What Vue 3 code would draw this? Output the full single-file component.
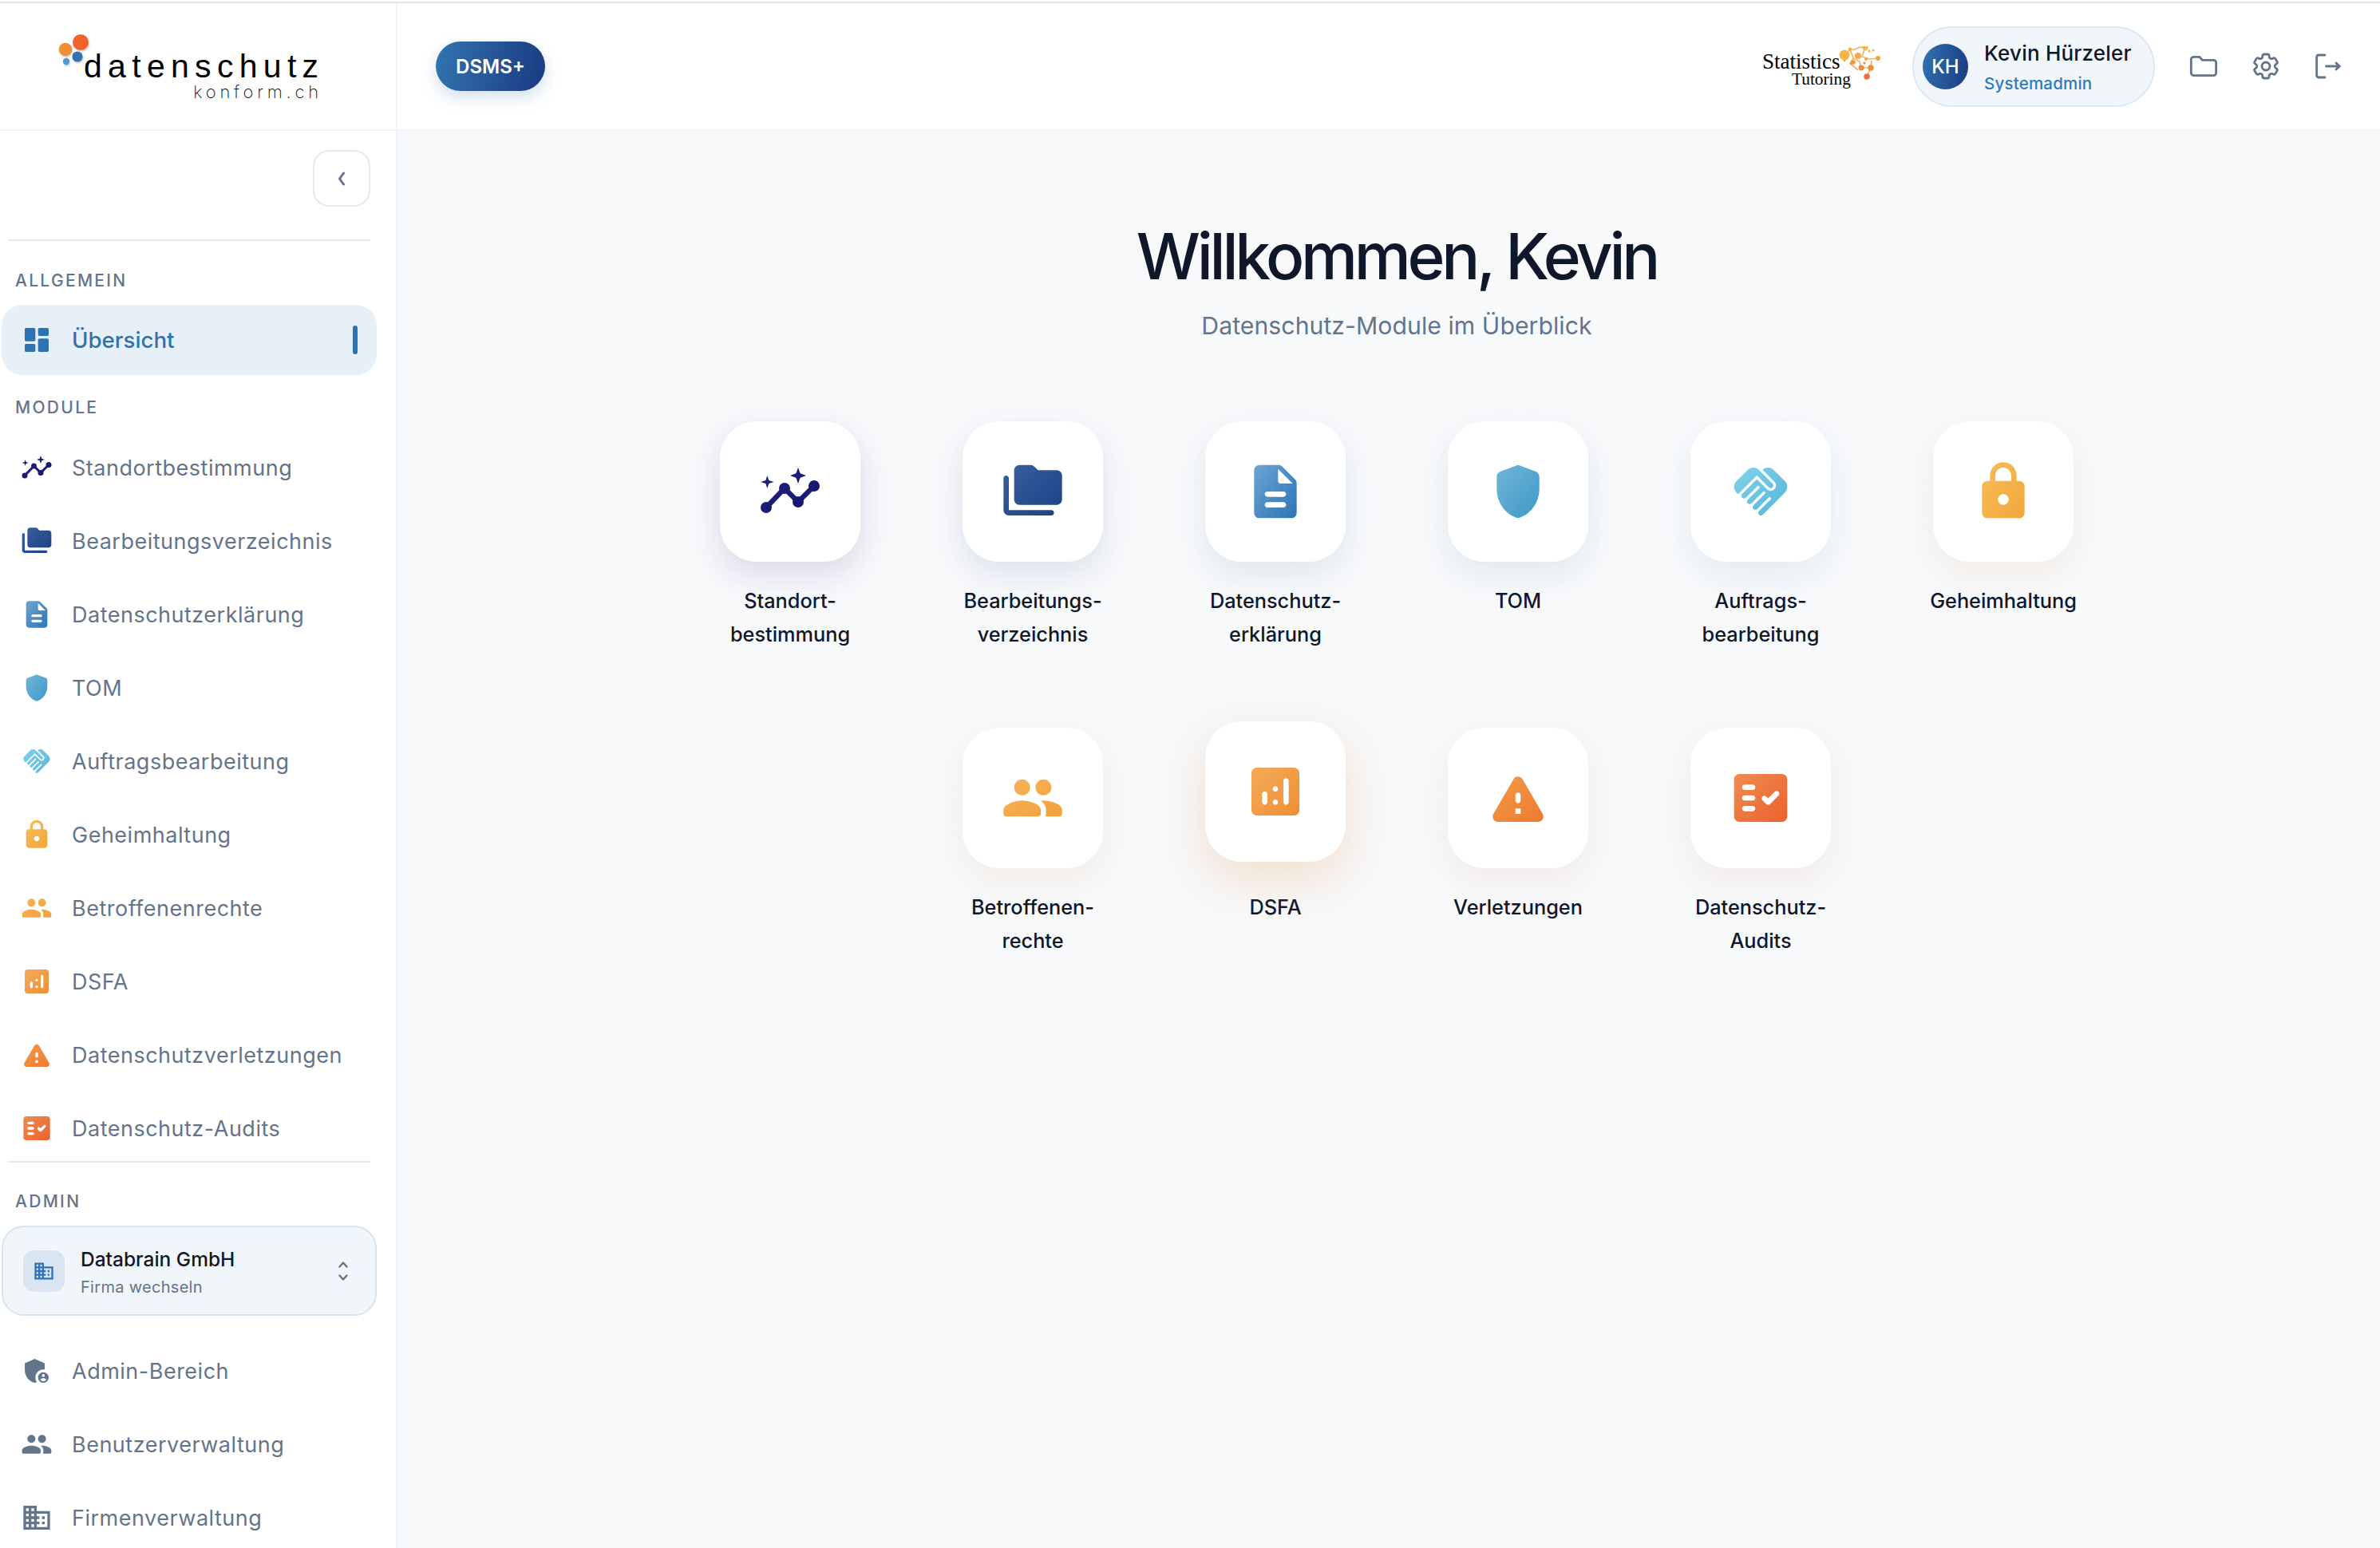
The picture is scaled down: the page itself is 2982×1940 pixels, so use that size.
<template>
  <div class="page">
    <div class="top-line"></div>

    <header class="header">
      <div class="logo-cell">
        <div class="logo">
          <svg class="logo-dots" viewBox="0 0 60 60" width="60" height="60">
            <circle cx="41" cy="13" r="10" fill="#f0622b" />
            <circle cx="22" cy="22" r="8.3" fill="#f18f34" />
            <circle cx="37" cy="31" r="6.6" fill="#3274b0" />
            <circle cx="23" cy="37" r="4.2" fill="#4a9bcf" />
          </svg>
          <div class="logo-main">datenschutz</div>
          <div class="logo-sub">konform.ch</div>
        </div>
      </div>

      <div class="bar">
        <div class="dsms">DSMS+</div>

        <div class="bar-right">
          <div class="partner">
            <div class="partner-name">Statistics</div>
            <div class="partner-sub">Tutoring</div>
            <svg class="partner-mark" viewBox="0 0 60 60" width="60" height="60">
              <path d="M7 11 14 4 20 4 26 1 33 1.500 M14 4 18 15 26 19 28 27 M33 1.500 29 13 38 16 49 15 M18 15 14 21 24 30 M28 27 40 27 35 38 M40 27 41 18" fill="none" stroke="#f5b060" stroke-width="1.700" />
              <circle v-for="(d, i) in partnerDots" :key="i" :cx="d[0]" :cy="d[1]" :r="d[2]" :fill="d[3]" />
            </svg>
          </div>

          <div class="user">
            <div class="avatar">KH</div>
            <div class="user-text">
              <div class="user-name">Kevin Hürzeler</div>
              <div class="user-role">Systemadmin</div>
            </div>
          </div>

          <div class="tool">
            <svg viewBox="0 0 24 24" width="40" height="40" fill="none" stroke="#64748b" stroke-width="1.7" stroke-linejoin="round">
              <path d="M2.6 7a2 2 0 0 1 2-2H9l2 2.4h8.4a2 2 0 0 1 2 2V17a2 2 0 0 1-2 2H4.6a2 2 0 0 1-2-2z" />
            </svg>
          </div>
          <div class="tool">
            <svg viewBox="0 0 24 24" width="40" height="40" fill="none" stroke="#64748b" stroke-width="1.7" stroke-linejoin="round">
              <path d="M9.594 3.94c.09-.542.56-.94 1.11-.94h2.593c.55 0 1.02.398 1.11.94l.213 1.281c.063.374.313.686.645.87.074.04.147.083.22.127.324.196.72.257 1.075.124l1.217-.456a1.125 1.125 0 011.37.49l1.296 2.247a1.125 1.125 0 01-.26 1.431l-1.003.827c-.293.24-.438.613-.431.992a6.759 6.759 0 010 .255c-.007.378.138.75.43.99l1.005.828c.424.35.534.954.26 1.43l-1.298 2.247a1.125 1.125 0 01-1.369.491l-1.217-.456c-.355-.133-.75-.072-1.076.124a6.57 6.57 0 01-.22.128c-.331.183-.581.495-.644.869l-.213 1.28c-.09.543-.56.941-1.11.941h-2.594c-.55 0-1.02-.398-1.11-.94l-.213-1.281c-.062-.374-.312-.686-.644-.87a6.52 6.52 0 01-.22-.127c-.325-.196-.72-.257-1.076-.124l-1.217.456a1.125 1.125 0 01-1.369-.49l-1.297-2.247a1.125 1.125 0 01.26-1.431l1.004-.827c.292-.24.437-.613.43-.992a6.932 6.932 0 010-.255c.007-.378-.138-.75-.43-.99l-1.004-.828a1.125 1.125 0 01-.26-1.43l1.297-2.247a1.125 1.125 0 011.37-.491l1.216.456c.356.133.751.072 1.076-.124.072-.044.146-.087.22-.128.332-.183.582-.495.644-.869l.214-1.281z" />
              <circle cx="12" cy="12" r="3" />
            </svg>
          </div>
          <div class="tool">
            <svg viewBox="0 0 24 24" width="40" height="40" fill="none" stroke="#64748b" stroke-width="1.7" stroke-linecap="round" stroke-linejoin="round">
              <path d="M9.6 3.6H5a1.6 1.6 0 0 0-1.6 1.6v13.6A1.6 1.6 0 0 0 5 20.4h4.6" />
              <path d="M10.5 12H20.5M18 9.6l2.6 2.4-2.6 2.4" />
            </svg>
          </div>
        </div>
      </div>
    </header>

    <div class="body">
      <!-- shared gradients for all module icons -->
      <svg class="defs" width="0" height="0">
        <defs>
          <linearGradient v-for="m in modules" :id="'grad-' + m.key" :key="m.key" x1="0" y1="0" x2="1" y2="1">
            <stop offset="0" :stop-color="m.from" />
            <stop offset="1" :stop-color="m.to" />
          </linearGradient>
        </defs>
      </svg>

      <aside class="sidebar">
        <div class="collapse-row">
          <button class="collapse">
            <svg viewBox="0 0 24 24" width="24" height="24" fill="none" stroke="#64748b" stroke-width="3" stroke-linecap="round" stroke-linejoin="round">
              <path d="M14.5 5 9.500 12l5 7" />
            </svg>
          </button>
        </div>
        <div class="divider"></div>

        <div class="section first">ALLGEMEIN</div>
        <div class="nav-row active">
          <svg class="nav-icon" viewBox="0 0 24 24">
            <path fill="#2f72b0" d="M4 13h6c.55 0 1-.45 1-1V4c0-.55-.45-1-1-1H4c-.55 0-1 .45-1 1v8c0 .55.45 1 1 1zm0 8h6c.55 0 1-.45 1-1v-4c0-.55-.45-1-1-1H4c-.55 0-1 .45-1 1v4c0 .55.45 1 1 1zm10 0h6c.55 0 1-.45 1-1v-8c0-.55-.45-1-1-1h-6c-.55 0-1 .45-1 1v8c0 .55.45 1 1 1zM13 4v4c0 .55.45 1 1 1h6c.55 0 1-.45 1-1V4c0-.55-.45-1-1-1h-6c-.55 0-1 .45-1 1z" />
          </svg>
          <span>Übersicht</span>
          <i class="active-mark"></i>
        </div>

        <div class="section">MODULE</div>
        <div class="nav-list">
          <div v-for="m in modules" :key="m.key" class="nav-row">
            <svg class="nav-icon" viewBox="0 0 24 24">
              <path v-if="m.line" :d="m.line" fill="none" :stroke="'url(#grad-' + m.key + ')'" stroke-width="1.9" stroke-linejoin="round" />
              <path :d="m.d" :fill="'url(#grad-' + m.key + ')'" fill-rule="evenodd" />
            </svg>
            <span>{{ m.nav }}</span>
          </div>
        </div>
        <div class="divider tight"></div>

        <div class="section admin">ADMIN</div>
        <div class="company">
          <div class="company-icon">
            <svg viewBox="0 0 24 24" width="28" height="28">
              <path fill="#2f72b5" :d="buildingPath" />
            </svg>
          </div>
          <div class="company-text">
            <div class="company-name">Databrain GmbH</div>
            <div class="company-sub">Firma wechseln</div>
          </div>
          <svg viewBox="0 0 24 32" width="24" height="32" fill="none" stroke="#64748b" stroke-width="2.4" stroke-linecap="round" stroke-linejoin="round">
            <path d="M7.5 10.5 12 5.5l4.500 5M7.500 21.500l4.500 5 4.500-5" />
          </svg>
        </div>

        <div class="nav-list admin-list">
          <div class="nav-row">
            <svg class="nav-icon" viewBox="0 0 24 24">
              <path fill="#64748b" d="M17 11c.34 0 .67.04 1 .09V6.27L10.500 3 3 6.270v4.910c0 4.540 3.200 8.790 7.500 9.820.550-.130 1.080-.320 1.600-.550-.690-.980-1.100-2.170-1.100-3.450 0-3.310 2.690-6 6-6z" />
              <path fill="#64748b" d="M17 13c-2.210 0-4 1.790-4 4s1.790 4 4 4 4-1.790 4-4-1.790-4-4-4zm0 1.380c.620 0 1.120.510 1.120 1.120s-.510 1.120-1.120 1.120-1.120-.510-1.120-1.120.500-1.120 1.120-1.120zm0 5.370c-.930 0-1.740-.460-2.240-1.170.050-.720 1.510-1.080 2.240-1.080s2.190.360 2.240 1.080c-.500.710-1.310 1.170-2.240 1.170z" />
            </svg>
            <span>Admin-Bereich</span>
          </div>
          <div class="nav-row">
            <svg class="nav-icon" viewBox="0 0 24 24">
              <path fill="#64748b" :d="peoplePath" />
            </svg>
            <span>Benutzerverwaltung</span>
          </div>
          <div class="nav-row">
            <svg class="nav-icon" viewBox="0 0 24 24">
              <path fill="#64748b" :d="buildingPath" />
            </svg>
            <span>Firmenverwaltung</span>
          </div>
        </div>
      </aside>

      <main class="main">
        <h1 class="title">Willkommen, Kevin</h1>
        <p class="subtitle">Datenschutz-Module im Überblick</p>

        <div class="grid">
          <div v-for="m in modules" :key="m.key" class="item">
            <div class="tile" :class="{ lift: m.key === 'dsfa' }" :style="{ '--glow': m.glow }">
              <svg viewBox="0 0 24 24" width="80" height="80">
                <path v-if="m.line" :d="m.line" fill="none" :stroke="'url(#grad-' + m.key + ')'" stroke-width="1.9" stroke-linejoin="round" />
                <path :d="m.d" :fill="'url(#grad-' + m.key + ')'" fill-rule="evenodd" />
              </svg>
            </div>
            <div class="label">
              <div v-for="l in m.label" :key="l">{{ l }}</div>
            </div>
          </div>
        </div>
      </main>
    </div>
  </div>
</template>

<script setup>
const peoplePath = 'M16 11c1.660 0 2.990-1.340 2.990-3S17.660 5 16 5c-1.660 0-3 1.340-3 3s1.340 3 3 3zm-8 0c1.660 0 2.990-1.340 2.990-3S9.660 5 8 5C6.340 5 5 6.340 5 8s1.340 3 3 3zm0 2c-2.330 0-7 1.170-7 3.500V18c0 .550.450 1 1 1h12c.550 0 1-.450 1-1v-1.500c0-2.330-4.670-3.500-7-3.500zm8 0c-.290 0-.620.020-.970.050.020.010.030.030.040.040 1.140.830 1.930 1.940 1.930 3.410V18c0 .350-.070.690-.180 1H22c.550 0 1-.450 1-1v-1.500c0-2.330-4.670-3.500-7-3.500z'

const buildingPath = 'M12 7V3H2v18h20V7H12zM6 19H4v-2h2v2zm0-4H4v-2h2v2zm0-4H4V9h2v2zm0-4H4V5h2v2zm4 12H8v-2h2v2zm0-4H8v-2h2v2zm0-4H8V9h2v2zm0-4H8V5h2v2zm10 12h-8v-2h2v-2h-2v-2h2v-2h-2V9h8v10zm-2-8h-2v2h2v-2zm0 4h-2v2h2v-2z'

const modules = [
  {
    key: 'standort', nav: 'Standortbestimmung', label: ['Standort-', 'bestimmung'],
    from: '#25237f', to: '#0f146c', glow: 'rgba(30, 30, 120, .14)',
    line: 'M3 18 9.900 10.800 15 15.900 21 9.900',
    d: 'M15 3l.8 2.200L18 6l-2.200.8L15 9l-.8-2.200L12 6l2.200-.8zM3.400 6l.6 1.800 1.900.6-1.900.6-.6 1.800-.6-1.800-1.900-.6 1.900-.6zM3 15.900a2.100 2.100 0 1 1 0 4.200 2.100 2.100 0 0 1 0-4.200zM9.900 8.700a2.100 2.100 0 1 1 0 4.200 2.100 2.100 0 0 1 0-4.200zM15 13.800a2.100 2.100 0 1 1 0 4.200 2.100 2.100 0 0 1 0-4.200zM21 7.800a2.100 2.100 0 1 1 0 4.200 2.100 2.100 0 0 1 0-4.200z',
  },
  {
    key: 'bearbeitung', nav: 'Bearbeitungsverzeichnis', label: ['Bearbeitungs-', 'verzeichnis'],
    from: '#38609f', to: '#1d4085', glow: 'rgba(40, 70, 130, .13)',
    d: 'M3 19V7c0-.550-.450-1-1-1s-1 .450-1 1v12c0 1.100.900 2 2 2h16c.550 0 1-.450 1-1s-.450-1-1-1H3zM21 4h-7l-1.410-1.410C12.210 2.210 11.700 2 11.170 2H7c-1.100 0-2 .900-2 2v11c0 1.100.900 2 2 2h14c1.100 0 2-.900 2-2V6c0-1.100-.900-2-2-2z',
  },
  {
    key: 'erklaerung', nav: 'Datenschutzerklärung', label: ['Datenschutz-', 'erklärung'],
    from: '#6aa5d3', to: '#2f74b5', glow: 'rgba(50, 110, 150, .12)',
    d: 'M14.590 2.590c-.380-.380-.890-.590-1.420-.590H6c-1.100 0-2 .900-2 2v16c0 1.100.890 2 1.990 2H18c1.100 0 2-.900 2-2V8.830c0-.530-.210-1.040-.590-1.410l-4.820-4.830zM15 18H9c-.550 0-1-.450-1-1s.450-1 1-1h6c.550 0 1 .450 1 1s-.450 1-1 1zm0-4H9c-.550 0-1-.450-1-1s.450-1 1-1h6c.550 0 1 .450 1 1s-.450 1-1 1zm-2-6V3.500L18.500 9H14c-.550 0-1-.450-1-1z',
  },
  {
    key: 'tom', nav: 'TOM', label: ['TOM'],
    from: '#70b6d9', to: '#3f98c7', glow: 'rgba(60, 120, 150, .12)',
    d: 'M11.300 2.260l-6 2.250C4.520 4.810 4 5.550 4 6.390v4.710c0 5.050 3.410 9.760 8 10.900 4.590-1.140 8-5.850 8-10.900V6.390c0-.830-.520-1.580-1.300-1.870l-6-2.250c-.450-.180-.950-.180-1.400-.010z',
  },
  {
    key: 'auftrag', nav: 'Auftragsbearbeitung', label: ['Auftrags-', 'bearbeitung'],
    from: '#84d2e8', to: '#55b5dc', glow: 'rgba(80, 150, 180, .12)',
    d: 'M16.480 10.410c-.390.390-1.040.390-1.430 0l-4.470-4.460-7.050 7.040-.660-.630c-1.170-1.170-1.170-3.070 0-4.240l4.240-4.240c1.170-1.170 3.070-1.170 4.240 0L16.480 9c.390.390.390 1.020 0 1.410zm.700-2.120c.780.780.780 2.050 0 2.830-1.270 1.270-2.610.220-2.830 0l-3.760-3.760-5.570 5.570c-.390.390-.390 1.020 0 1.410.390.390 1.020.390 1.420 0l4.620-4.620.710.710-4.620 4.620c-.390.390-.390 1.020 0 1.410.390.390 1.020.390 1.420 0l4.620-4.620.710.710-4.620 4.620c-.390.390-.390 1.020 0 1.410.390.390 1.020.390 1.410 0l4.620-4.620.710.710-4.620 4.620c-.390.390-.390 1.020 0 1.410.390.390 1.020.390 1.410 0l8.320-8.340c1.170-1.170 1.170-3.070 0-4.240l-4.240-4.240c-1.150-1.150-3.010-1.170-4.180-.060l4.470 4.470z',
  },
  {
    key: 'geheim', nav: 'Geheimhaltung', label: ['Geheimhaltung'],
    from: '#f7bd58', to: '#f3a63d', glow: 'rgba(200, 140, 60, .1)',
    d: 'M18 8h-1V6c0-2.760-2.240-5-5-5S7 3.240 7 6v2H6c-1.100 0-2 .900-2 2v10c0 1.100.900 2 2 2h12c1.100 0 2-.900 2-2V10c0-1.100-.900-2-2-2zm-6 9c-1.100 0-2-.900-2-2s.900-2 2-2 2 .900 2 2-.900 2-2 2zM9 8V6c0-1.660 1.340-3 3-3s3 1.340 3 3v2H9z',
  },
  {
    key: 'betroffen', nav: 'Betroffenenrechte', label: ['Betroffenen-', 'rechte'],
    from: '#f6b458', to: '#f2a03c', glow: 'rgba(200, 140, 60, .1)',
    d: peoplePath,
  },
  {
    key: 'dsfa', nav: 'DSFA', label: ['DSFA'],
    from: '#f3ab5a', to: '#f08e33', glow: 'rgba(225, 150, 70, .26)',
    d: 'M19 3H5c-1.100 0-2 .900-2 2v14c0 1.100.900 2 2 2h14c1.100 0 2-.900 2-2V5c0-1.100-.900-2-2-2zM8 17c-.550 0-1-.450-1-1v-3c0-.550.450-1 1-1s1 .450 1 1v3c0 .550-.450 1-1 1zm4 0c-.550 0-1-.450-1-1s.450-1 1-1 1 .450 1 1-.450 1-1 1zm0-5c-.550 0-1-.450-1-1s.450-1 1-1 1 .450 1 1-.450 1-1 1zm4 5c-.550 0-1-.450-1-1V8c0-.550.450-1 1-1s1 .450 1 1v8c0 .550-.450 1-1 1z',
  },
  {
    key: 'verletzung', nav: 'Datenschutzverletzungen', label: ['Verletzungen'],
    from: '#f39a48', to: '#ee7a30', glow: 'rgba(200, 120, 80, .1)',
    d: 'M4.470 21h15.060c1.540 0 2.500-1.670 1.730-3L13.730 4.990c-.770-1.330-2.690-1.330-3.460 0L2.740 18c-.770 1.330.190 3 1.730 3zM12 14c-.550 0-1-.450-1-1v-2c0-.550.450-1 1-1s1 .450 1 1v2c0 .550-.450 1-1 1zm1 4h-2v-2h2v2z',
  },
  {
    key: 'audit', nav: 'Datenschutz-Audits', label: ['Datenschutz-', 'Audits'],
    from: '#f08c52', to: '#eb612b', glow: 'rgba(200, 110, 80, .1)',
    d: 'M20 3H4c-1.100 0-2 .900-2 2v14c0 1.100.900 2 2 2h16c1.100 0 2-.900 2-2V5c0-1.100-.900-2-2-2zM9 17H6c-.550 0-1-.450-1-1s.450-1 1-1h3c.550 0 1 .450 1 1s-.450 1-1 1zm0-4H6c-.550 0-1-.450-1-1s.450-1 1-1h3c.550 0 1 .450 1 1s-.450 1-1 1zm0-4H6c-.550 0-1-.450-1-1s.450-1 1-1h3c.550 0 1 .450 1 1s-.450 1-1 1zm9.700 2.120-3.170 3.170c-.390.390-1.030.390-1.420 0l-1.410-1.420c-.390-.390-.390-1.020 0-1.410s1.020-.390 1.410 0l.710.710 2.470-2.470c.390-.390 1.020-.390 1.410 0 .390.400.390 1.030 0 1.420z',
  },
]

// x, y, r, colour of the network dots in the partner logo
const partnerDots = [
  [7, 11, 6.500, '#f6b545'], [33, 1.5, 3.600, '#f6b545'], [14, 4, 2.400, '#f6b545'], [24, 12, 4, '#f5aa45'],
  [38, 6, 1.400, '#f5ae3f'], [43, 5, 1.400, '#f5ae3f'], [49, 15, 3, '#f3a445'], [34, 16, 2, '#f3a040'],
  [18, 20, 2.800, '#f19645'], [7, 18, 1.200, '#f19645'], [15, 22, 1.200, '#f09040'], [28, 27, 3.400, '#f08a42'],
  [40, 27, 3.700, '#f08a42'], [32, 21, 1.500, '#f08a42'], [35, 38, 3.700, '#ee6b3f'],
]
</script>

<style>
html,
body {
  margin: 0;
  background: #fff;
}
</style>

<style scoped>
.page {
  width: 2982px;
  height: 1940px;
  overflow: hidden;
  display: flex;
  flex-direction: column;
  font-family: Inter, "Noto Sans", sans-serif;
  color: #0f172a;
  background: #fff;
}

.top-line {
  height: 2px;
  margin-top: 2px;
  background: #e5e5e5;
  flex: none;
}

.header {
  display: flex;
  height: 160px;
  flex: none;
  border-bottom: 2px solid #f1f5f9;
  box-sizing: border-box;
}

.logo-cell {
  width: 498px;
  flex: none;
  border-right: 2px solid #f1f5f9;
  box-sizing: border-box;
  padding: 57px 0 0 105px;
}

.logo {
  position: relative;
  width: 294px;
}

.logo-dots {
  position: absolute;
  left: -45px;
  top: -21px;
  filter: drop-shadow(1px 2px 1px rgba(0, 0, 0, .18));
}

.logo-main {
  font-family: "Liberation Sans", sans-serif;
  font-size: 41px;
  line-height: 44px;
  letter-spacing: 7.300px;
  color: #000;
  white-space: nowrap;
}

.logo-sub {
  font-family: Inter, sans-serif;
  font-weight: 200;
  font-size: 22px;
  line-height: 22px;
  letter-spacing: 4.800px;
  text-align: right;
  margin-right: -5px;
  margin-top: -1px;
  color: #111;
}

.bar {
  flex: 1;
  display: flex;
  align-items: center;
  justify-content: space-between;
  padding: 0 26px 0 48px;
}

.dsms {
  width: 137px;
  height: 62px;
  border-radius: 31px;
  background: linear-gradient(100deg, #3274b0, #1a3a82);
  box-shadow: 0 8px 20px rgba(50, 116, 176, .22);
  color: #fff;
  font-weight: 600;
  font-size: 24px;
  display: flex;
  align-items: center;
  justify-content: center;
}

.bar-right {
  display: flex;
  align-items: center;
}

.partner {
  position: relative;
  width: 148px;
  height: 64px;
  margin-right: 40px;
  font-family: "Liberation Serif", serif;
  color: #000;
}

.partner-name {
  font-size: 27px;
  line-height: 30px;
  margin-top: 11px;
}

.partner-sub {
  font-size: 21.300px;
  line-height: 20px;
  margin-top: -3px;
  margin-left: 37px;
}

.partner-mark {
  position: absolute;
  left: 96px;
  top: 7px;
}

.user {
  width: 304px;
  height: 101px;
  box-sizing: border-box;
  border: 2px solid #dbe8f3;
  border-radius: 50px;
  background: #f1f6fb;
  display: flex;
  align-items: center;
  gap: 20px;
  padding-left: 11px;
  margin-right: 22px;
}

.user-text {
  padding-top: 4px;
}

.avatar {
  width: 57px;
  height: 57px;
  border-radius: 50%;
  background: linear-gradient(100deg, #3274b0, #1a3a82);
  color: #fff;
  font-weight: 500;
  font-size: 24px;
  display: flex;
  align-items: center;
  justify-content: center;
  flex: none;
}

.user-name {
  font-size: 26px;
  font-weight: 500;
  line-height: 32px;
  letter-spacing: .2px;
  white-space: nowrap;
}

.user-role {
  font-size: 20.500px;
  font-weight: 500;
  line-height: 28px;
  margin-top: 8px;
  letter-spacing: .2px;
  color: #2f7ab8;
}

.tool {
  width: 78px;
  display: flex;
  justify-content: center;
}

.body {
  flex: 1;
  display: flex;
  min-height: 0;
  position: relative;
}

.defs {
  position: absolute;
}

.sidebar {
  width: 498px;
  flex: none;
  box-sizing: border-box;
  border-right: 2px solid #eef3f8;
  padding-left: 2px;
  background: #fff;
}

.collapse-row {
  display: flex;
  justify-content: flex-end;
  padding: 24px 32px 0 0;
}

.collapse {
  width: 72px;
  height: 71px;
  box-sizing: border-box;
  background: #fff;
  border: 2px solid #e5eaf1;
  border-radius: 20px;
  padding: 0;
  display: flex;
  align-items: center;
  justify-content: center;
}

.divider {
  width: 454px;
  height: 2px;
  margin: 41px 0 0 8px;
  background: #e2e8f0;
}

.divider.tight {
  margin-top: 0;
}

.section {
  font-size: 21px;
  font-weight: 500;
  line-height: 24px;
  letter-spacing: 2.300px;
  color: #64748b;
  padding-left: 17px;
  margin: 29px 0 22px;
}

.section.first {
  margin: 38px 0 18px;
}

.section.admin {
  margin: 37px 0 18px;
  padding-left: 17px;
}

.nav-list {
  display: flex;
  flex-direction: column;
  gap: 10px;
}

.admin-list {
  margin-top: 28px;
}

.nav-row {
  width: 470px;
  height: 82px;
  box-sizing: border-box;
  display: flex;
  align-items: center;
  gap: 24px;
  padding-left: 24px;
  font-size: 27px;
  letter-spacing: .5px;
  color: #64748b;
  white-space: nowrap;
}

.nav-row.active {
  height: 88px;
  background: #e8f0f7;
  border-radius: 26px;
  color: #2f72b0;
  font-size: 27.700px;
  font-weight: 500;
  letter-spacing: 0;
}

.nav-icon {
  width: 40px;
  height: 40px;
  flex: none;
}

.active-mark {
  width: 6px;
  height: 36px;
  border-radius: 3px;
  background: #2f72b0;
  margin-left: auto;
  margin-right: 24px;
}

.company {
  width: 470px;
  height: 113px;
  box-sizing: border-box;
  border: 2px solid #d5e5f2;
  border-radius: 28px;
  background: #f1f6fb;
  display: flex;
  align-items: center;
  padding: 0 28px 0 25px;
}

.company-icon {
  width: 52px;
  height: 52px;
  border-radius: 14px;
  background: #d9e6f2;
  display: flex;
  align-items: center;
  justify-content: center;
  flex: none;
}

.company-text {
  flex: 1;
  margin-left: 20px;
  padding-top: 3px;
}

.company-name {
  font-size: 24.500px;
  font-weight: 500;
  line-height: 30px;
}

.company-sub {
  font-size: 20px;
  line-height: 26px;
  margin-top: 7px;
  letter-spacing: .3px;
  color: #64748b;
}

.main {
  flex: 1;
  min-width: 0;
  background: #f8f9fb;
  padding: 109px 0 0 20px;
  display: flex;
  flex-direction: column;
  align-items: center;
}

.title {
  margin: 0;
  font-size: 80px;
  font-weight: 550;
  line-height: 96px;
  letter-spacing: -4.300px;
  color: #0f172a;
}

.subtitle {
  margin: 19px 0 100px;
  font-size: 30.200px;
  line-height: 40px;
  letter-spacing: .05px;
  color: #64748b;
}

.grid {
  width: 1760px;
  display: flex;
  flex-wrap: wrap;
  justify-content: center;
  gap: 96px 64px;
}

.item {
  width: 240px;
  display: flex;
  flex-direction: column;
  align-items: center;
}

.tile {
  width: 176px;
  height: 176px;
  border-radius: 46px;
  background: #fff;
  box-shadow: 0 16px 40px var(--glow);
  display: flex;
  align-items: center;
  justify-content: center;
}

.tile.lift {
  transform: translateY(-8px);
  box-shadow: 0 22px 60px var(--glow);
}

.label {
  margin-top: 28px;
  height: 84px;
  font-size: 25.300px;
  font-weight: 500;
  line-height: 42px;
  text-align: center;
  white-space: nowrap;
  color: #0f172a;
}
</style>
